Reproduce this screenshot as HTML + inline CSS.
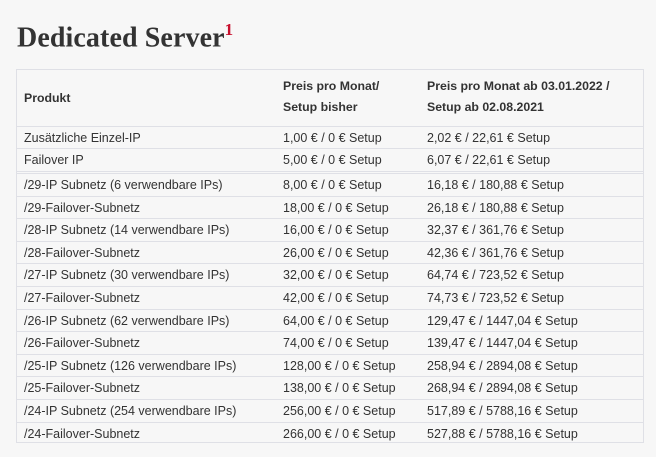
<!DOCTYPE html>
<html><head><meta charset="utf-8"><style>
html,body{margin:0;padding:0;background:#f7f7f7;width:656px;height:457px;overflow:hidden}
body{font-family:"Liberation Sans",sans-serif;color:#333}
h1{position:absolute;left:17px;top:13px;margin:0;font-family:"Liberation Serif",serif;font-weight:bold;font-size:28px;color:#333;letter-spacing:0.1px;line-height:36px}
h1 sup{color:#c8102e;font-size:17px;position:relative;top:-1px}
.tbl{position:absolute;left:16px;top:69px;width:628px;height:374px;border:1px solid #dfe0e6;box-sizing:border-box}
.row{position:absolute;left:0;right:0;border-top:1px solid #dfe0e6;font-size:12.5px;line-height:22px}
.row span{position:absolute;top:0;white-space:nowrap}
.c1{left:7px}.c2{left:266px}.c3{left:410px}
.hd{font-weight:bold;font-size:12.3px;color:#333}
</style></head><body>
<h1>Dedicated Server<sup>1</sup></h1>
<div class="tbl">
<div class="row hd" style="top:0;border-top:none;height:57px">
<span class="c1" style="top:17px">Produkt</span>
<span class="c2" style="top:6px;line-height:21px">Preis pro Monat/<br>Setup bisher</span>
<span class="c3" style="top:6px;line-height:21px">Preis pro Monat ab 03.01.2022 /<br>Setup ab 02.08.2021</span>
</div>
<div class="row" style="top:56px"><span class="c1">Zusätzliche Einzel-IP</span><span class="c2">1,00 € / 0 € Setup</span><span class="c3">2,02 € / 22,61 € Setup</span></div>
<div class="row" style="top:78px"><span class="c1">Failover IP</span><span class="c2">5,00 € / 0 € Setup</span><span class="c3">6,07 € / 22,61 € Setup</span></div>
<div class="row" style="top:101px;height:2px"></div>
<div class="row" style="top:103px"><span class="c1">/29-IP Subnetz (6 verwendbare IPs)</span><span class="c2">8,00 € / 0 € Setup</span><span class="c3">16,18 € / 180,88 € Setup</span></div>
<div class="row" style="top:125.6px"><span class="c1">/29-Failover-Subnetz</span><span class="c2">18,00 € / 0 € Setup</span><span class="c3">26,18 € / 180,88 € Setup</span></div>
<div class="row" style="top:148.2px"><span class="c1">/28-IP Subnetz (14 verwendbare IPs)</span><span class="c2">16,00 € / 0 € Setup</span><span class="c3">32,37 € / 361,76 € Setup</span></div>
<div class="row" style="top:170.8px"><span class="c1">/28-Failover-Subnetz</span><span class="c2">26,00 € / 0 € Setup</span><span class="c3">42,36 € / 361,76 € Setup</span></div>
<div class="row" style="top:193.4px"><span class="c1">/27-IP Subnetz (30 verwendbare IPs)</span><span class="c2">32,00 € / 0 € Setup</span><span class="c3">64,74 € / 723,52 € Setup</span></div>
<div class="row" style="top:216px"><span class="c1">/27-Failover-Subnetz</span><span class="c2">42,00 € / 0 € Setup</span><span class="c3">74,73 € / 723,52 € Setup</span></div>
<div class="row" style="top:238.6px"><span class="c1">/26-IP Subnetz (62 verwendbare IPs)</span><span class="c2">64,00 € / 0 € Setup</span><span class="c3">129,47 € / 1447,04 € Setup</span></div>
<div class="row" style="top:261.2px"><span class="c1">/26-Failover-Subnetz</span><span class="c2">74,00 € / 0 € Setup</span><span class="c3">139,47 € / 1447,04 € Setup</span></div>
<div class="row" style="top:283.8px"><span class="c1">/25-IP Subnetz (126 verwendbare IPs)</span><span class="c2">128,00 € / 0 € Setup</span><span class="c3">258,94 € / 2894,08 € Setup</span></div>
<div class="row" style="top:306.4px"><span class="c1">/25-Failover-Subnetz</span><span class="c2">138,00 € / 0 € Setup</span><span class="c3">268,94 € / 2894,08 € Setup</span></div>
<div class="row" style="top:329px"><span class="c1">/24-IP Subnetz (254 verwendbare IPs)</span><span class="c2">256,00 € / 0 € Setup</span><span class="c3">517,89 € / 5788,16 € Setup</span></div>
<div class="row" style="top:351.6px"><span class="c1">/24-Failover-Subnetz</span><span class="c2">266,00 € / 0 € Setup</span><span class="c3">527,88 € / 5788,16 € Setup</span></div>
</div>
</body></html>
